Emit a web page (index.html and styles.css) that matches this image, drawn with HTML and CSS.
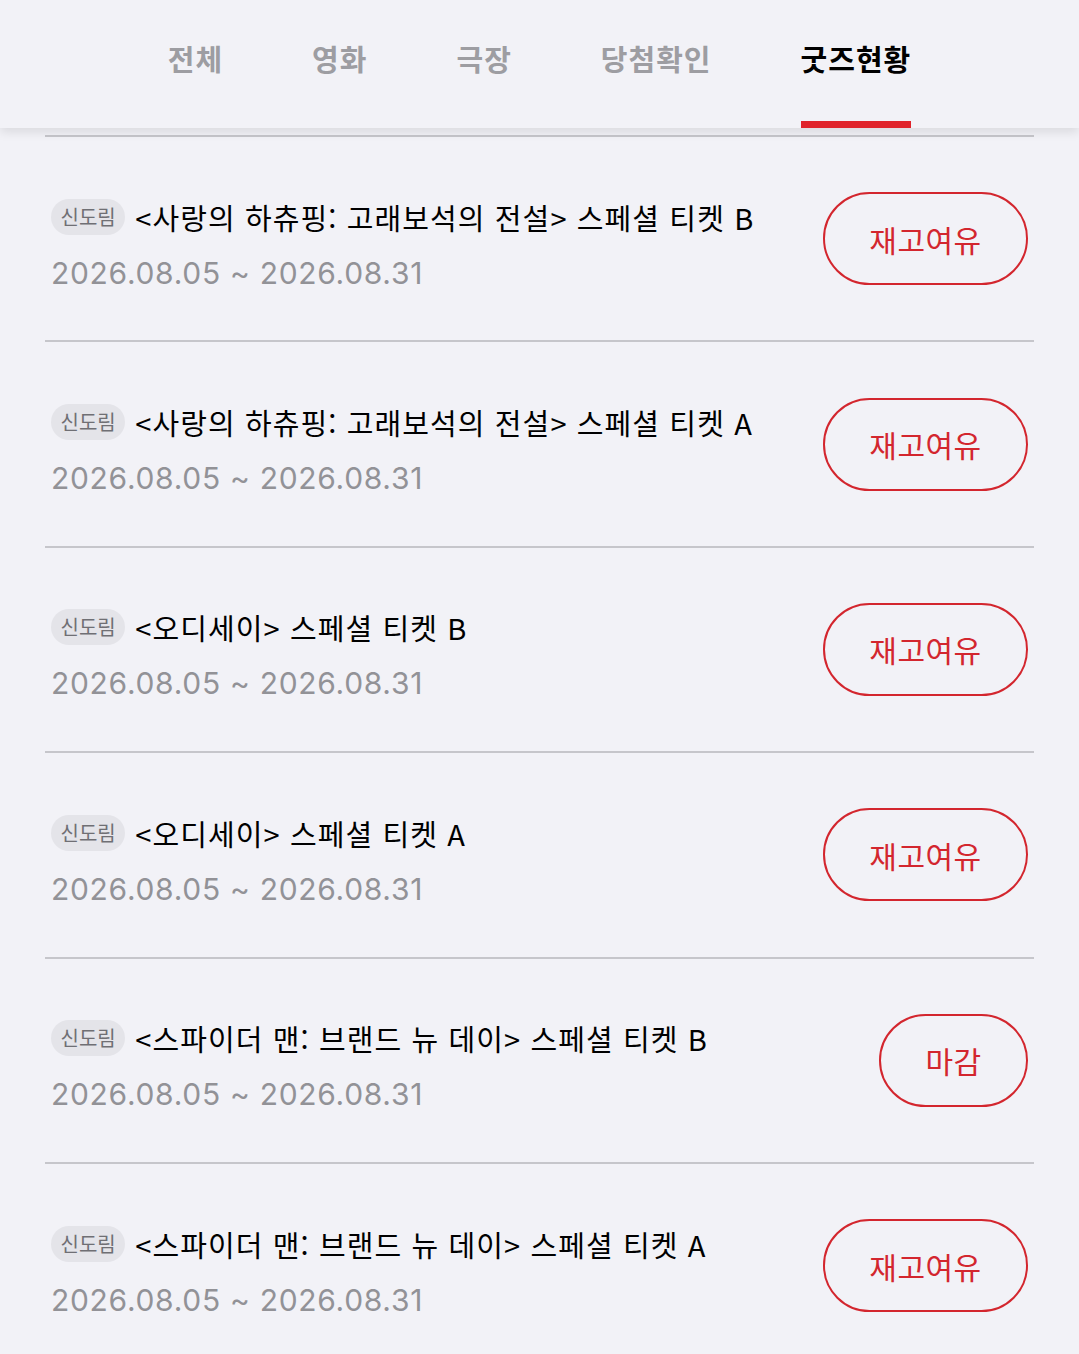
FILE: index.html
```html
<!DOCTYPE html>
<html lang="ko">
<head>
    <meta charset="UTF-8">
    <meta name="viewport" content="width=device-width, initial-scale=1.0">
    <title>굿즈현황</title>
    <link rel="stylesheet" href="styles.css">
</head>
<body>

    <header class="tabs">
        <div class="tab">전체</div>
        <div class="tab">영화</div>
        <div class="tab">극장</div>
        <div class="tab">당첨확인</div>
        <div class="tab active">굿즈현황</div>
    </header>

    <ul class="goods-list">
        <li class="goods">
            <div class="info">
                <div class="title"><span class="badge">신도림</span>&lt;사랑의 하츄핑: 고래보석의 전설&gt; 스페셜 티켓 B</div>
                <div class="date">2026.08.05 ~ 2026.08.31</div>
            </div>
            <button class="status">재고여유</button>
        </li>
        <li class="goods">
            <div class="info">
                <div class="title"><span class="badge">신도림</span>&lt;사랑의 하츄핑: 고래보석의 전설&gt; 스페셜 티켓 A</div>
                <div class="date">2026.08.05 ~ 2026.08.31</div>
            </div>
            <button class="status">재고여유</button>
        </li>
        <li class="goods">
            <div class="info">
                <div class="title"><span class="badge">신도림</span>&lt;오디세이&gt; 스페셜 티켓 B</div>
                <div class="date">2026.08.05 ~ 2026.08.31</div>
            </div>
            <button class="status">재고여유</button>
        </li>
        <li class="goods">
            <div class="info">
                <div class="title"><span class="badge">신도림</span>&lt;오디세이&gt; 스페셜 티켓 A</div>
                <div class="date">2026.08.05 ~ 2026.08.31</div>
            </div>
            <button class="status">재고여유</button>
        </li>
        <li class="goods">
            <div class="info">
                <div class="title"><span class="badge">신도림</span>&lt;스파이더 맨: 브랜드 뉴 데이&gt; 스페셜 티켓 B</div>
                <div class="date">2026.08.05 ~ 2026.08.31</div>
            </div>
            <button class="status closed">마감</button>
        </li>
        <li class="goods">
            <div class="info">
                <div class="title"><span class="badge">신도림</span>&lt;스파이더 맨: 브랜드 뉴 데이&gt; 스페셜 티켓 A</div>
                <div class="date">2026.08.05 ~ 2026.08.31</div>
            </div>
            <button class="status">재고여유</button>
        </li>
    </ul>

</body>
</html>
```

FILE: styles.css
```css
body { margin: 0; padding: 0; background-color: #f2f2f7; font-family: "Inter", "Noto Sans CJK KR", sans-serif; overflow: hidden; }
.tabs { height: 128px; display: flex; justify-content: center; gap: 89px; background-color: #f2f2f7; box-shadow: 0 4px 10px rgba(0, 0, 0, 0.1); position: relative; z-index: 1; }
.tab { box-sizing: border-box; height: 128px; padding-top: 38px; font-family: "Noto Sans CJK KR", sans-serif; font-size: 29px; font-weight: 700; line-height: 40px; letter-spacing: 1px; color: #9d9da2; border-bottom: 7px solid transparent; }
.tab.active { color: #000; border-bottom-color: #e0232b; }
.goods-list { list-style: none; margin: 7px 45px 0; padding: 0; border-top: 2px solid #c6c6cb; }
.goods { box-sizing: border-box; height: 205.4px; display: flex; align-items: center; justify-content: space-between; padding: 0 6px; border-bottom: 2px solid #c6c6cb; }
.info { padding-top: 14px; }
.title { display: flex; align-items: center; gap: 10px; font-family: "Noto Sans CJK KR", sans-serif; font-size: 29px; line-height: 36px; letter-spacing: 1.1px; color: #000; white-space: nowrap; }
.badge { display: inline-block; height: 36px; padding: 0 9.5px; border-radius: 18px; background-color: #e4e4e9; color: #6f6f74; font-size: 20px; line-height: 36px; letter-spacing: 0; }
.date { margin-top: 18px; font-size: 30px; line-height: 40px; letter-spacing: 0.7px; color: #929297; }
.status { box-sizing: border-box; width: 205px; height: 93px; border: 2.5px solid #d3262e; border-radius: 47px; background: transparent; color: #d3262e; font-family: "Noto Sans CJK KR", sans-serif; font-size: 30px; letter-spacing: 0.5px; padding: 0; }
.status.closed { width: 149px; }
```
